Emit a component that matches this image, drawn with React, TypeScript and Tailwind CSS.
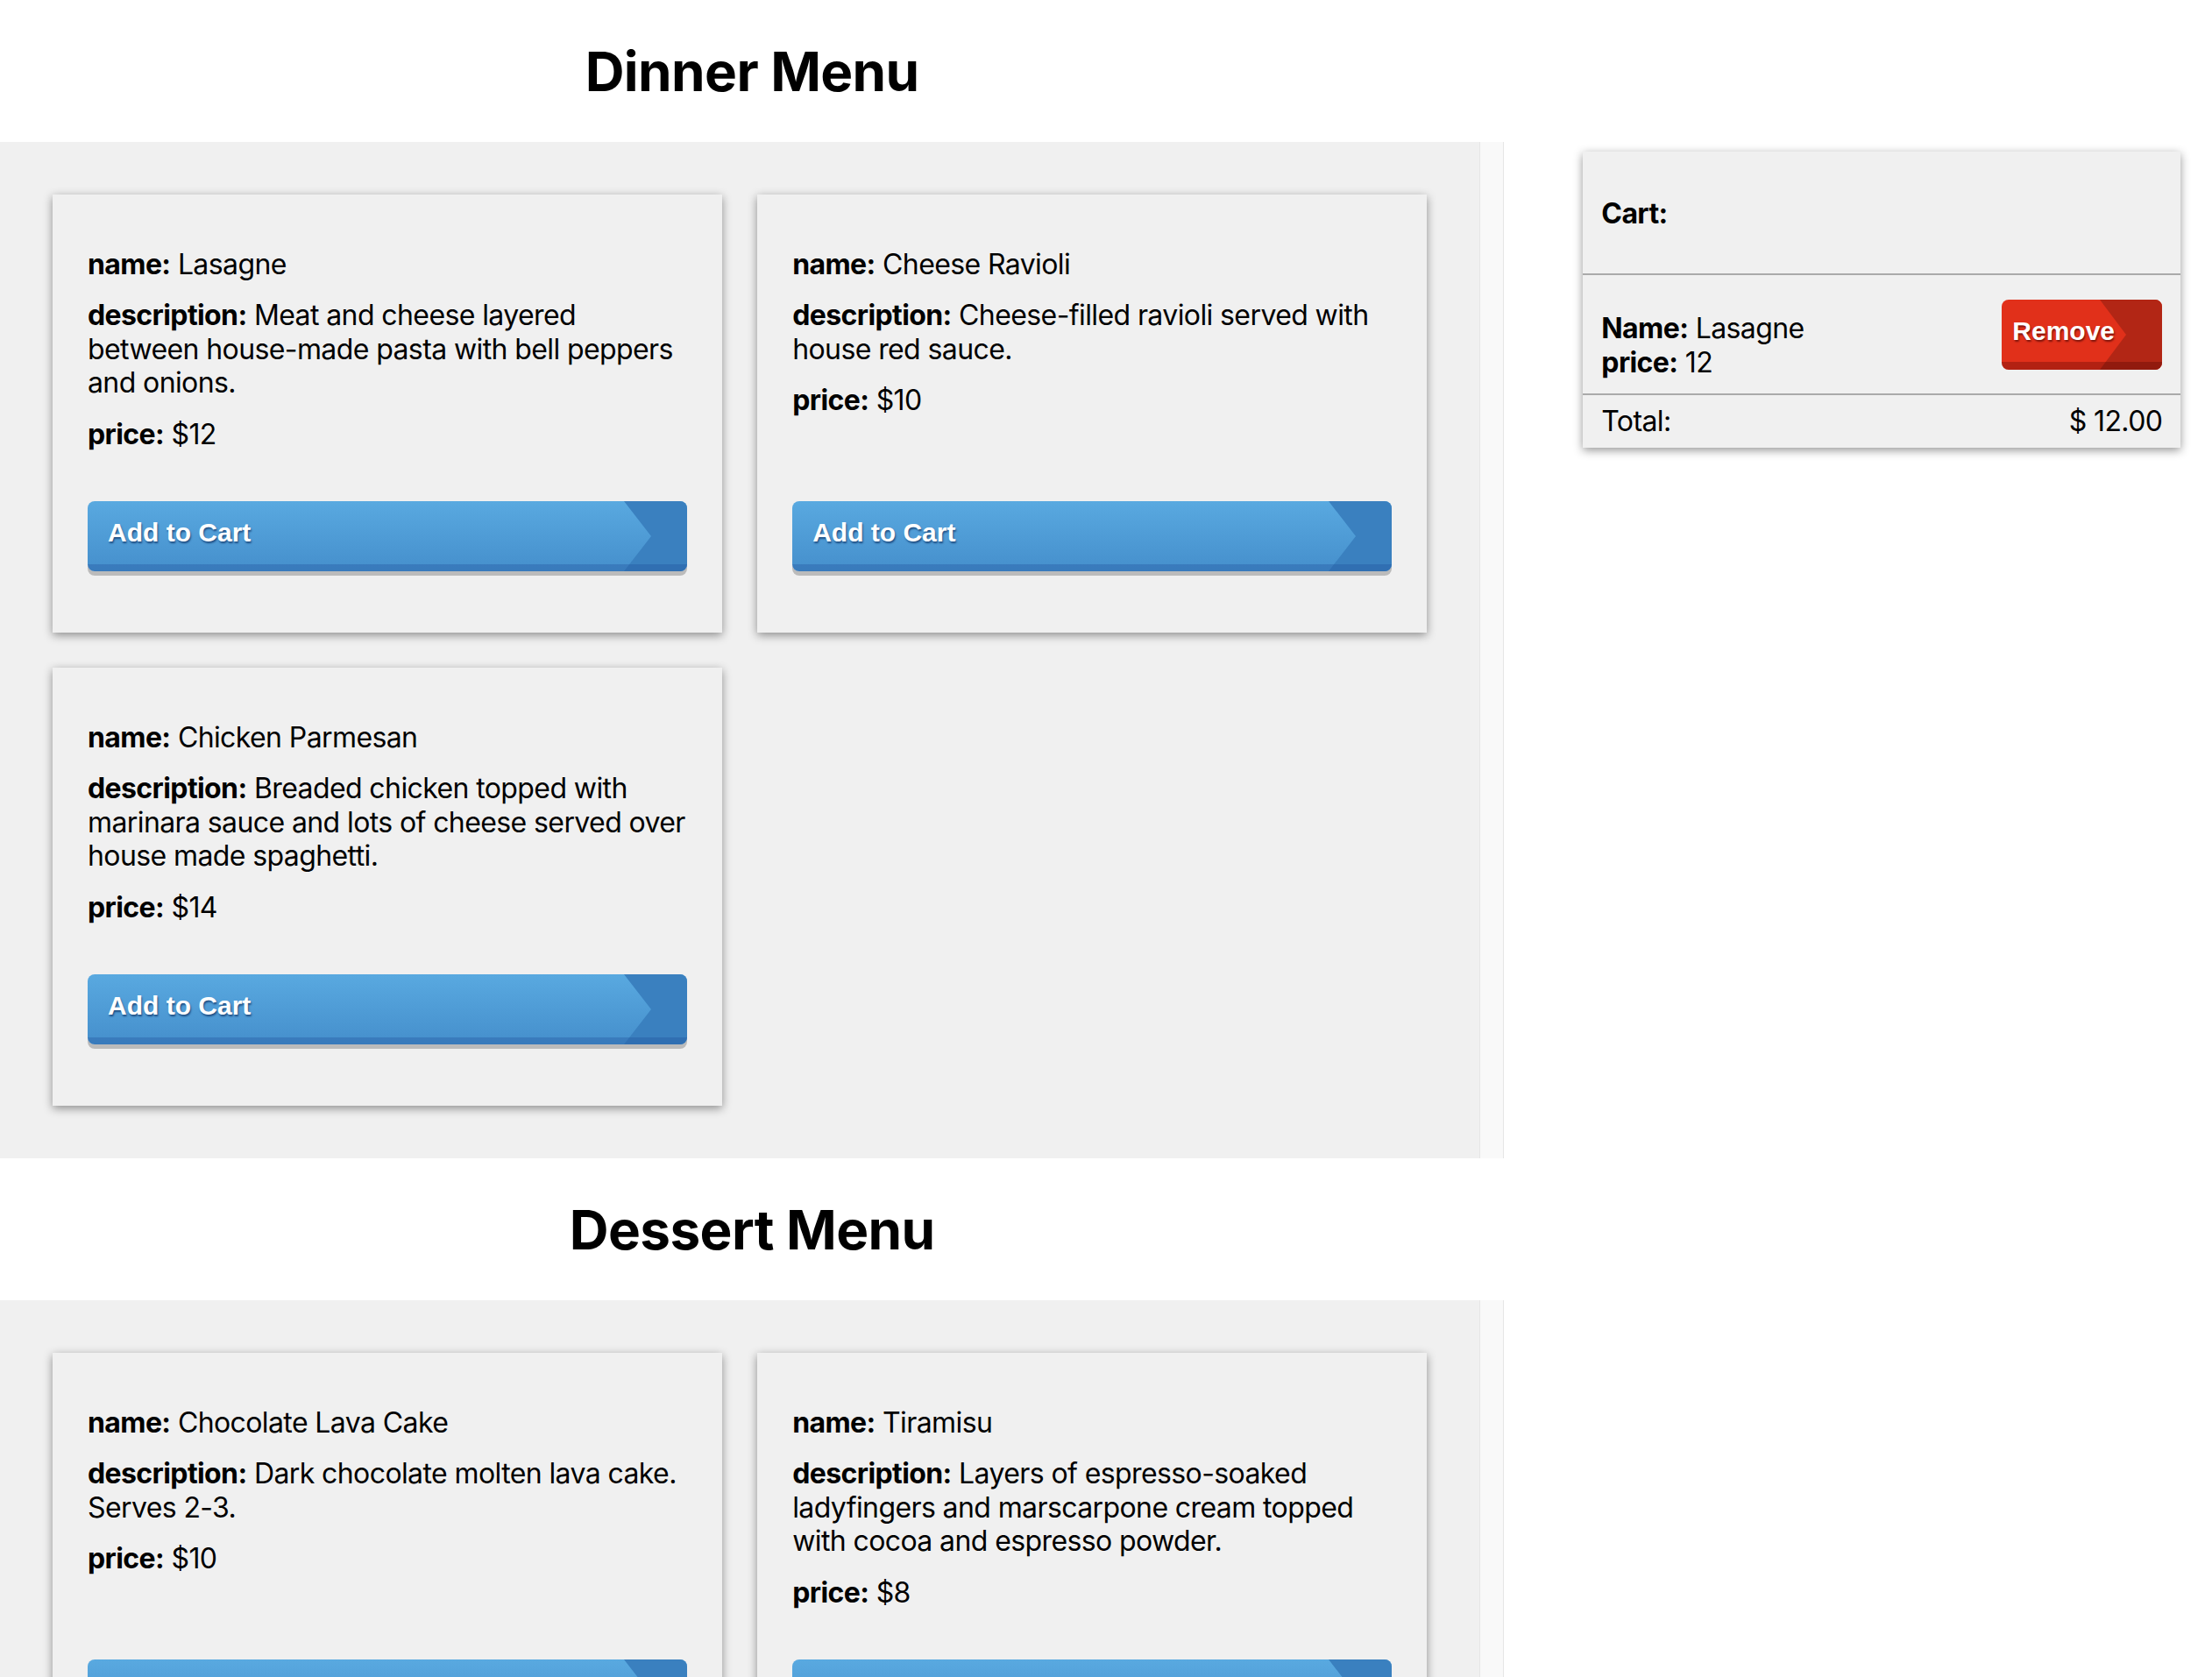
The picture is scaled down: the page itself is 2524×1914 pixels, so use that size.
import React from "react";

type Item = { name: string; desc: string; price: number };

const dinner: Item[] = [
  {
    name: "Lasagne",
    desc: "Meat and cheese layered between house-made pasta with bell peppers and onions.",
    price: 12,
  },
  {
    name: "Cheese Ravioli",
    desc: "Cheese-filled ravioli served with house red sauce.",
    price: 10,
  },
  {
    name: "Chicken Parmesan",
    desc: "Breaded chicken topped with marinara sauce and lots of cheese served over house made spaghetti.",
    price: 14,
  },
];

const dessert: Item[] = [
  {
    name: "Chocolate Lava Cake",
    desc: "Dark chocolate molten lava cake. Serves 2-3.",
    price: 10,
  },
  {
    name: "Tiramisu",
    desc: "Layers of espresso-soaked ladyfingers and marscarpone cream topped with cocoa and espresso powder.",
    price: 8,
  },
];

const btnFont = { fontFamily: '"Liberation Sans", Arial, Helvetica, sans-serif' };

function AddButton() {
  return (
    <button
      style={btnFont}
      className="relative mt-auto flex h-[80px] w-full shrink-0 items-center overflow-hidden rounded-[8px] bg-linear-to-b from-[#59a9e0] to-[#458fcc] pb-[8px] pl-[23px] text-left text-[30px] font-bold tracking-normal text-white shadow-[0_5px_0_#bbbbbb] [text-shadow:1px_2px_2px_rgba(0,30,80,0.6)]"
    >
      <svg
        className="absolute right-0 top-0 h-[80px] w-[72px]"
        viewBox="0 0 72 80"
        preserveAspectRatio="none"
      >
        <polygon points="0,0 72,0 72,80 0,80 31,40" fill="#3a80bf" />
      </svg>
      <div className="absolute bottom-0 left-0 right-0 h-[8px] bg-[rgba(20,60,140,0.25)]" />
      <span className="relative">Add to Cart</span>
    </button>
  );
}

function RemoveButton() {
  return (
    <button
      style={btnFont}
      className="relative flex h-[80px] w-[183px] shrink-0 items-center overflow-hidden rounded-[8px] bg-[#e1301a] pb-[9px] pl-[12px] text-left text-[30px] font-bold tracking-normal text-white [text-shadow:1px_2px_2px_rgba(60,0,0,0.6)]"
    >
      <svg
        className="absolute right-0 top-0 h-[80px] w-[71px]"
        viewBox="0 0 71 80"
        preserveAspectRatio="none"
      >
        <polygon points="0,0 71,0 71,80 0,80 30,40" fill="#b22615" />
      </svg>
      <div className="absolute bottom-0 left-0 right-0 h-[9px] bg-[rgba(70,0,0,0.3)]" />
      <span className="relative">Remove</span>
    </button>
  );
}

function MenuCard({ item }: { item: Item }) {
  return (
    <div className="flex h-[500px] flex-col bg-[#f0f0f0] px-[40px] pb-[70px] pt-[61px] shadow-[0_3px_10px_rgba(0,0,0,0.42)]">
      <p>
        <b className="font-bold">name:</b> {item.name}
      </p>
      <p className="mt-[20px]">
        <b className="font-bold">description:</b> {item.desc}
      </p>
      <p className="mt-[20px]">
        <b className="font-bold">price:</b> ${item.price}
      </p>
      <AddButton />
    </div>
  );
}

function MenuSection({ title, items }: { title: string; items: Item[] }) {
  return (
    <section>
      <h1 className="flex h-[162px] items-center justify-center pt-[2px] text-[62px] font-bold tracking-[-0.6px] text-black">
        {title}
      </h1>
      <div className="flex bg-white">
        <div className="grid flex-1 grid-cols-2 gap-[40px] bg-[#f0f0f0] p-[60px]">
          {items.map((it) => (
            <MenuCard key={it.name} item={it} />
          ))}
        </div>
        <div className="w-[28px] border-x border-[#e6e6e6] bg-[#f9f9f9]" />
      </div>
    </section>
  );
}

function Cart() {
  return (
    <div className="ml-[90px] mt-[173px] w-[682px] bg-[#f0f0f0] shadow-[0_3px_10px_rgba(0,0,0,0.42)]">
      <div className="border-b-2 border-[#aaaaaa] px-[21px] pb-[49px] pt-[52px] font-bold">Cart:</div>
      <div className="flex items-start justify-between border-b-2 border-[#aaaaaa] px-[21px] pb-[16px] pt-[28px]">
        <div className="mt-[14px]">
          <div>
            <b className="font-bold">Name:</b> Lasagne
          </div>
          <div>
            <b className="font-bold">price:</b> 12
          </div>
        </div>
        <RemoveButton />
      </div>
      <div className="flex justify-between px-[21px] pb-[10px] pt-[11px]">
        <span>Total:</span>
        <span>$ 12.00</span>
      </div>
    </div>
  );
}

export default function App() {
  return (
    <div
      className="flex h-screen overflow-hidden bg-white text-[32px] leading-[1.2] tracking-[-0.6px] text-black"
      style={{ fontFamily: 'Inter, "Liberation Sans", Arial, sans-serif' }}
    >
      <div className="w-[68%] shrink-0">
        <MenuSection title="Dinner Menu" items={dinner} />
        <MenuSection title="Dessert Menu" items={dessert} />
      </div>
      <div className="flex-1">
        <Cart />
      </div>
    </div>
  );
}
